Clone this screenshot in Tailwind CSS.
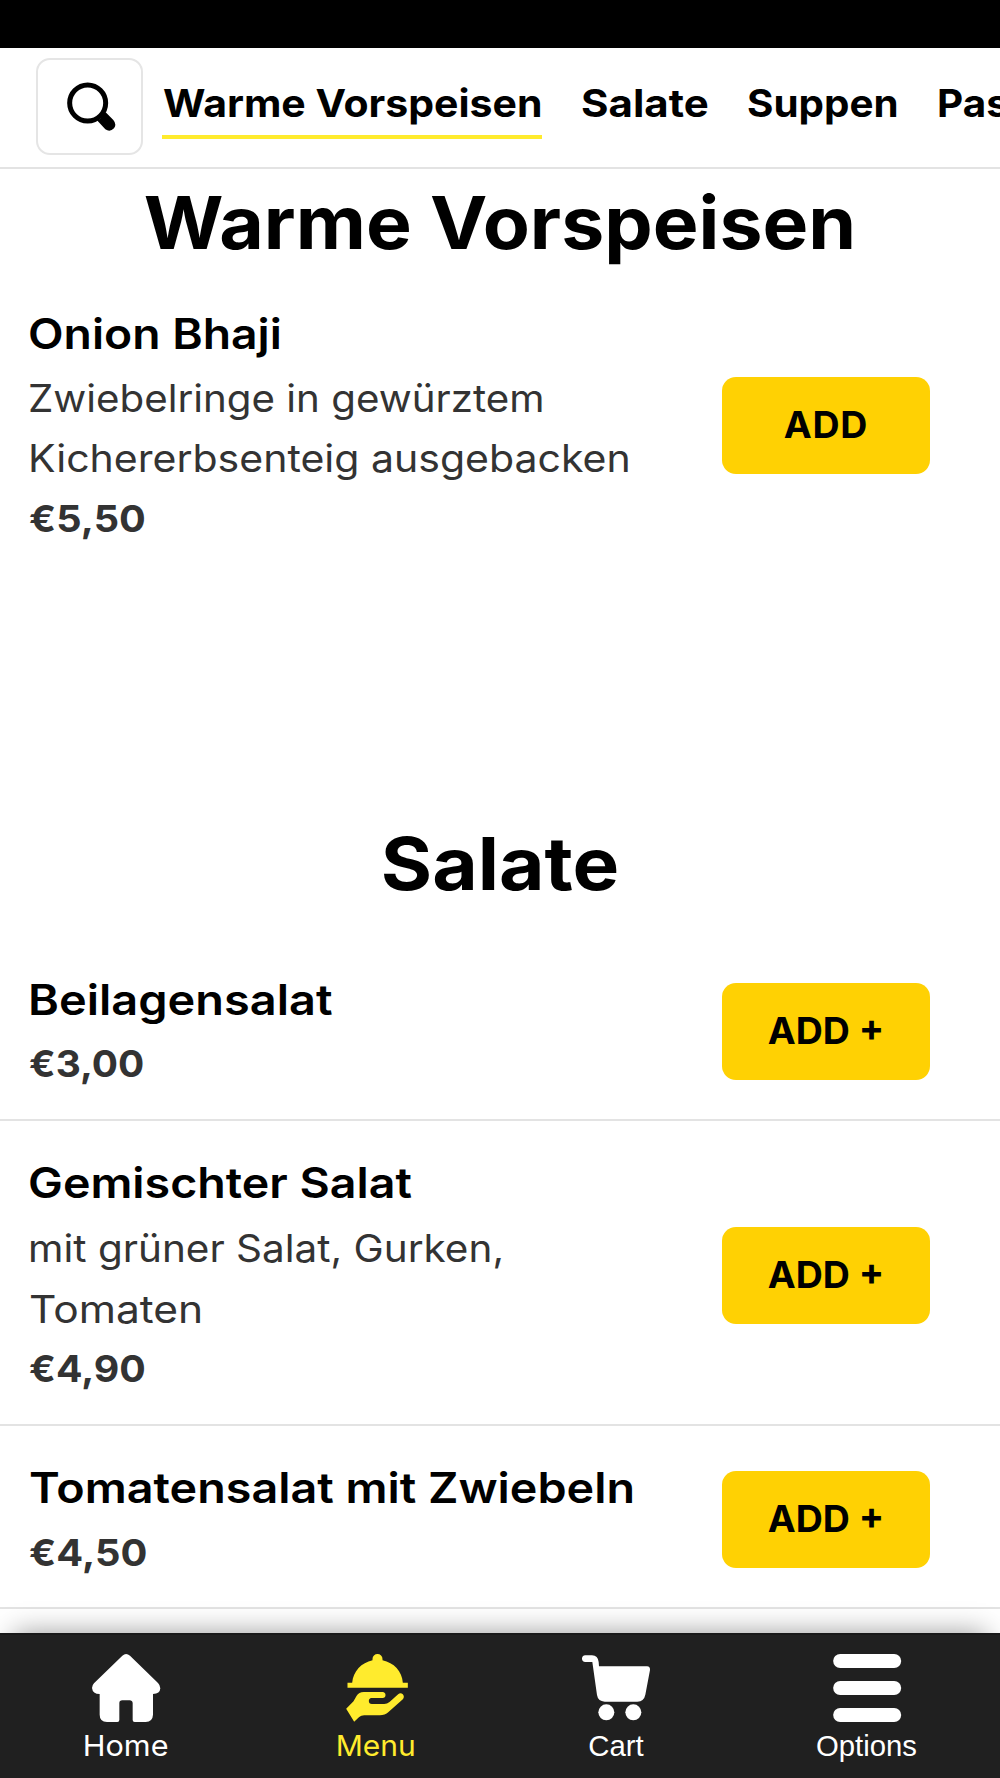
<!DOCTYPE html>
<html lang="de">
<head>
<meta charset="utf-8">
<meta name="viewport" content="width=device-width, initial-scale=1">
<title>Speisekarte</title>
<script src="https://cdn.jsdelivr.net/npm/@tailwindcss/browser@4"></script>
</head>
<body class="flex h-[1778px] w-[1000px] flex-col overflow-hidden bg-white font-['Inter',sans-serif] text-black">
  <div class="h-12 shrink-0 bg-black"></div>

  <!-- Search and category tabs -->
  <header class="flex h-[121px] shrink-0 items-start overflow-hidden border-b-2 border-[#e3e3e3] bg-white pl-9">
    <button class="mt-[10px] mr-[19px] flex h-[97px] w-[107px] shrink-0 items-start rounded-[14px] border-2 border-[#e5e5e5] pt-[21px] pl-[28px]" aria-label="Suche">
      <svg class="h-[50px] w-[50px]" viewBox="50 32 150 150">
        <circle cx="115" cy="98" r="54" fill="none" stroke="#000" stroke-width="15"/>
        <path d="M143 150Q154 148 157 138Q160 129 169 126L192 149Q203 162 194 174Q182 187 168 177Z"/>
      </svg>
    </button>
    <nav class="flex gap-[39px] pt-[24px] text-[38.5px] leading-[63px] font-bold whitespace-nowrap">
      <a class="h-[67px] w-[380px] shrink-0 border-b-4 border-[#ffeb2d] pl-px"><span class="inline-block origin-left scale-x-[1.064]">Warme Vorspeisen</span></a>
      <a class="w-[127px] shrink-0"><span class="inline-block origin-left scale-x-[1.091]">Salate</span></a>
      <a class="w-[151px] shrink-0"><span class="inline-block origin-left scale-x-[1.048]">Suppen</span></a>
      <a class="shrink-0"><span class="inline-block origin-left scale-x-[1.05]">Pasta</span></a>
    </nav>
  </header>

  <main class="min-h-0 flex-1 overflow-hidden">
    <section class="h-[641px]">
      <h2 class="h-[103px] scale-x-[1.061] text-center text-[72.5px] leading-[108px] font-bold">Warme Vorspeisen</h2>
      <article class="flex h-[304px] items-center justify-between pr-[70px] pl-7">
        <div class="h-full pt-[31.5px] text-[38.3px] leading-[60.5px] text-[#333]">
          <h3 class="h-[64px] origin-left scale-x-[1.089] text-[42.5px] leading-[60px] font-semibold text-black">Onion Bhaji</h3>
          <p><span class="block origin-left scale-x-[1.052]">Zwiebelringe in gewürztem</span><span class="block origin-left scale-x-[1.071]">Kichererbsenteig ausgebacken</span></p>
          <p class="origin-left scale-x-[1.058] pl-px text-[37.5px] font-bold">€5,50</p>
        </div>
        <button class="mt-[3px] h-[97px] w-[208px] rounded-[14px] bg-[#ffd103] text-[37.5px] font-bold tracking-[0.7px]">ADD</button>
      </article>
    </section>

    <section>
      <h2 class="h-32 scale-x-[1.082] text-center text-[72.5px] leading-[107px] font-bold">Salate</h2>
      <article class="flex h-[183.3px] items-center justify-between border-b-2 border-[#e3e3e3] pr-[70px] pl-7">
        <div class="h-full pt-[31.5px] text-[38.3px] leading-[60.5px] text-[#333]">
          <h3 class="h-[64px] origin-left scale-x-[1.104] text-[42.5px] leading-[60px] font-semibold text-black">Beilagensalat</h3>
          <p class="origin-left scale-x-[1.038] pl-px text-[37.5px] font-bold">€3,00</p>
        </div>
        <button class="mt-[5px] h-[97px] w-[208px] rounded-[14px] bg-[#ffd103] text-[37.5px] font-bold">ADD +</button>
      </article>
      <article class="flex h-[304.3px] items-center justify-between border-b-2 border-[#e3e3e3] pr-[70px] pl-7">
        <div class="h-full pt-[32px] text-[38.3px] leading-[60.5px] text-[#333]">
          <h3 class="h-[65px] origin-left scale-x-[1.096] text-[42.5px] leading-[60px] font-semibold text-black">Gemischter Salat</h3>
          <p><span class="block origin-left scale-x-[1.057]">mit grüner Salat, Gurken,</span><span class="block origin-left scale-x-[1.11] pl-px">Tomaten</span></p>
          <p class="origin-left scale-x-[1.048] pl-px text-[37.5px] font-bold">€4,90</p>
        </div>
        <button class="mt-[6px] h-[97px] w-[208px] rounded-[14px] bg-[#ffd103] text-[37.5px] font-bold">ADD +</button>
      </article>
      <article class="flex h-[183.3px] items-center justify-between border-b-2 border-[#e3e3e3] pr-[70px] pl-7">
        <div class="h-full pt-[32px] text-[38.3px] leading-[60.5px] text-[#333]">
          <h3 class="h-[65px] origin-left scale-x-[1.0985] pl-px text-[42.5px] leading-[60px] font-semibold whitespace-nowrap text-black">Tomatensalat mit Zwiebeln</h3>
          <p class="origin-left scale-x-[1.063] pl-px text-[37.5px] font-bold">€4,50</p>
        </div>
        <button class="mt-[6px] h-[97px] w-[208px] rounded-[14px] bg-[#ffd103] text-[37.5px] font-bold">ADD +</button>
      </article>
    </section>
  </main>

  <!-- Bottom navigation -->
  <footer class="relative grid h-[145px] shrink-0 grid-cols-[252px_247px_234px_267px] border-t-2 border-[#191919] bg-[#202020] text-[29px] leading-10 text-white shadow-[0_-14px_26px_-14px_rgba(0,0,0,0.4)]">
    <a class="flex flex-col items-center pt-[19px]">
      <svg class="mb-[4px] h-[68px] w-[68px] overflow-visible" viewBox="275 161 204 204" fill="currentColor">
        <path d="M366 166Q377 156 389 166L473 248Q480 255 480 264Q479 281 458 281V343Q457 364 436 365H403Q397 365 397 359V308Q396 300 388 300H366Q357 300 357 308V359Q357 365 351 365H320Q298 364 298 343V281Q277 281 275 263Q275 255 281 249Z"/>
      </svg>
      <span class="scale-x-[1.056]">Home</span>
    </a>
    <a class="flex flex-col items-center pt-[19px] text-[#ffeb2d]">
      <svg class="mb-[4px] h-[68px] w-[68px] overflow-visible" viewBox="1025.5 161 204 204" fill="currentColor">
        <path d="M1117 180V176A15 15 0 0 1 1147 176V180C1181 187 1206 213 1208 247H1223V262H1042V247H1056C1059 213 1084 187 1117 180Z"/>
        <path d="M1038 325L1060 303L1069 287Q1076 275 1091 275H1147Q1156 276 1156 284Q1156 293 1147 293H1114Q1106 294 1106 302Q1106 311 1115 311H1152Q1161 311 1168 305L1194 282Q1201 276 1208 282Q1214 290 1208 297L1165 335Q1154 345 1139 345H1092Q1083 345 1077 350L1062 364Z"/>
      </svg>
      <span class="scale-x-[1.034]">Menu</span>
    </a>
    <a class="flex flex-col items-center pt-[19px] font-['Liberation_Sans',sans-serif]">
      <svg class="mb-[4px] h-[68px] w-[68px] overflow-visible" viewBox="246 161 204 204" fill="currentColor">
        <path d="M256 165H276Q294 166 296 185L297 198H441Q451 199 450 209L436 283Q432 303 412 304H314Q294 303 291 284L277 185H256Q246 184 246 175Q246 166 256 165Z"/>
        <circle cx="319" cy="336" r="24"/>
        <circle cx="400" cy="336" r="24"/>
      </svg>
      <span class="text-[29.3px]">Cart</span>
    </a>
    <a class="flex flex-col items-center pt-[19px] font-['Liberation_Sans',sans-serif]">
      <svg class="mb-[4px] h-[68px] w-[68px] overflow-visible" viewBox="998.5 161 204 204" fill="currentColor">
        <rect x="999" y="161" width="204" height="42" rx="21"/>
        <rect x="999" y="242" width="204" height="42" rx="21"/>
        <rect x="999" y="323" width="204" height="42" rx="21"/>
      </svg>
      <span class="text-[29.3px]">Options</span>
    </a>
  </footer>
</body>
</html>
